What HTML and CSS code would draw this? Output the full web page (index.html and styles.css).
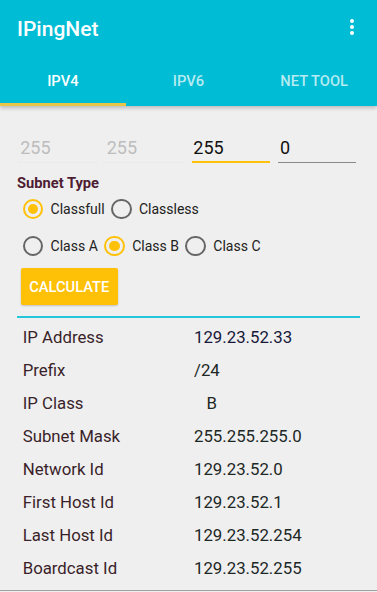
FILE: index.html
```html
<!DOCTYPE html>
<html>
<head>
<meta charset="utf-8">
<title>IPingNet</title>
<link rel="stylesheet" href="styles.css">
</head>
<body>
<div class="app">
  <header class="appbar">
    <div class="toolbar">
      <span class="title">IPingNet</span>
      <span class="overflow"><i></i><i></i><i></i></span>
    </div>
    <nav class="tabs">
      <div class="tab active">IPV4</div>
      <div class="tab">IPV6</div>
      <div class="tab">NET TOOL</div>
    </nav>
  </header>
  <main class="content">
    <div class="octets">
      <div class="field disabled">255</div>
      <div class="field disabled">255</div>
      <div class="field focused">255</div>
      <div class="field">0</div>
    </div>
    <div class="section-title">Subnet Type</div>
    <div class="radio-row first">
      <label class="radio checked"><span class="circle"></span>Classfull</label>
      <label class="radio"><span class="circle"></span>Classless</label>
    </div>
    <div class="radio-row second">
      <label class="radio"><span class="circle"></span>Class A</label>
      <label class="radio checked"><span class="circle"></span>Class B</label>
      <label class="radio"><span class="circle"></span>Class C</label>
    </div>
    <button class="calc">CALCULATE</button>
    <div class="divider"></div>
    <div class="results">
      <div class="row"><span class="label">IP Address</span><span class="value ip">129.23.52.33</span></div>
      <div class="row"><span class="label">Prefix</span><span class="value">/24</span></div>
      <div class="row"><span class="label">IP Class</span><span class="value">   B</span></div>
      <div class="row"><span class="label">Subnet Mask</span><span class="value">255.255.255.0</span></div>
      <div class="row"><span class="label">Network Id</span><span class="value">129.23.52.0</span></div>
      <div class="row"><span class="label">First Host Id</span><span class="value">129.23.52.1</span></div>
      <div class="row"><span class="label">Last Host Id</span><span class="value">129.23.52.254</span></div>
      <div class="row"><span class="label">Boardcast Id</span><span class="value">129.23.52.255</span></div>
    </div>
  </main>
  <div class="bottom-line"></div>
</div>
</body>
</html>
```
FILE: styles.css
```css
html, body {
  margin: 0;
  padding: 0;
}
body {
  width: 377px;
  height: 592px;
  overflow: hidden;
  background: #efefef;
  font-family: Roboto, "Noto Sans", "Liberation Sans", sans-serif;
}
.app {
  height: 592px;
  display: flex;
  flex-direction: column;
}
.appbar {
  background: #00bcd4;
  color: #fff;
  box-shadow: 0 2px 4px rgba(0,0,0,0.22);
  position: relative;
  z-index: 1;
}
.toolbar {
  height: 58px;
  display: flex;
  align-items: center;
  justify-content: space-between;
  padding: 0 0 0 17px;
}
.title {
  font-size: 21px;
  font-weight: 500;
}
.overflow {
  width: 50px;
  height: 58px;
  display: flex;
  flex-direction: column;
  align-items: center;
  justify-content: center;
  gap: 2.2px;
  margin-bottom: 4px;
}
.overflow i {
  display: block;
  width: 4.2px;
  height: 4.2px;
  border-radius: 50%;
  background: #fff;
}
.tabs {
  display: grid;
  grid-template-columns: 1fr 1fr 1fr;
  height: 48px;
}
.tab {
  display: flex;
  align-items: center;
  justify-content: center;
  font-size: 14.7px;
  font-weight: 500;
  color: rgba(255,255,255,0.72);
  border-bottom: 3px solid transparent;
  padding-top: 1px;
  box-sizing: border-box;
}
.tab.active {
  color: #fff;
  border-bottom-color: #e9c64a;
}
.content {
  padding: 30px 17px 0 17px;
}
.octets {
  display: grid;
  grid-template-columns: repeat(4, 1fr);
  column-gap: 8.7px;
  padding-left: 1.7px;
  width: 339.3px;
  box-sizing: border-box;
}
.field {
  font-size: 18px;
  line-height: 24px;
  padding: 0 0 2px 1.5px;
  color: #111;
  border-bottom: 1px solid #8a8a8a;
}
.field.disabled {
  color: #bdbdbd;
  border-bottom: 1px dotted #e6e6e6;
}
.field.focused {
  padding-bottom: 1px;
  border-bottom: 2px solid #ffc107;
}
.section-title {
  margin-top: 10px;
  font-size: 14.7px;
  line-height: 20px;
  font-weight: 700;
  color: #4e1d33;
}
.radio-row {
  display: flex;
  align-items: center;
  height: 28px;
  padding-left: 5.7px;
  gap: 6.5px;
}
.radio-row.first {
  margin-top: 2px;
}
.radio-row.second {
  margin-top: 9px;
}
.radio {
  display: flex;
  align-items: center;
  gap: 7.3px;
  font-size: 14px;
  color: #212121;
}
.circle {
  width: 20.6px;
  height: 20.6px;
  box-sizing: border-box;
  border: 2.1px solid #666;
  border-radius: 50%;
  display: flex;
  align-items: center;
  justify-content: center;
}
.radio.checked .circle {
  border-color: #ffc107;
}
.radio.checked .circle::after {
  content: "";
  width: 10.4px;
  height: 10.4px;
  border-radius: 50%;
  background: #ffc107;
}
.calc {
  display: block;
  margin: 8px 0 0 4px;
  width: 96.6px;
  height: 37.3px;
  border: none;
  border-radius: 2px;
  background: #ffc107;
  color: #fff;
  font-family: inherit;
  font-size: 14.7px;
  font-weight: 500;
  padding: 0;
  box-shadow: 0 1px 2px rgba(0,0,0,0.2);
}
.divider {
  margin-top: 11px;
  height: 2px;
  width: 343.3px;
  background: #26c6da;
}
.results {
  margin-top: 2px;
}
.row {
  display: flex;
  align-items: center;
  height: 33px;
  padding-left: 5.7px;
  font-size: 16.8px;
}
.label {
  width: 171.3px;
  color: #3a1f2a;
}
.value {
  color: #1c2826;
  white-space: pre;
}
.value.ip {
  color: #17183a;
}
.bottom-line {
  margin-top: auto;
  height: 1.5px;
  background: #a0a0a0;
  margin-bottom: 1px;
}
```
